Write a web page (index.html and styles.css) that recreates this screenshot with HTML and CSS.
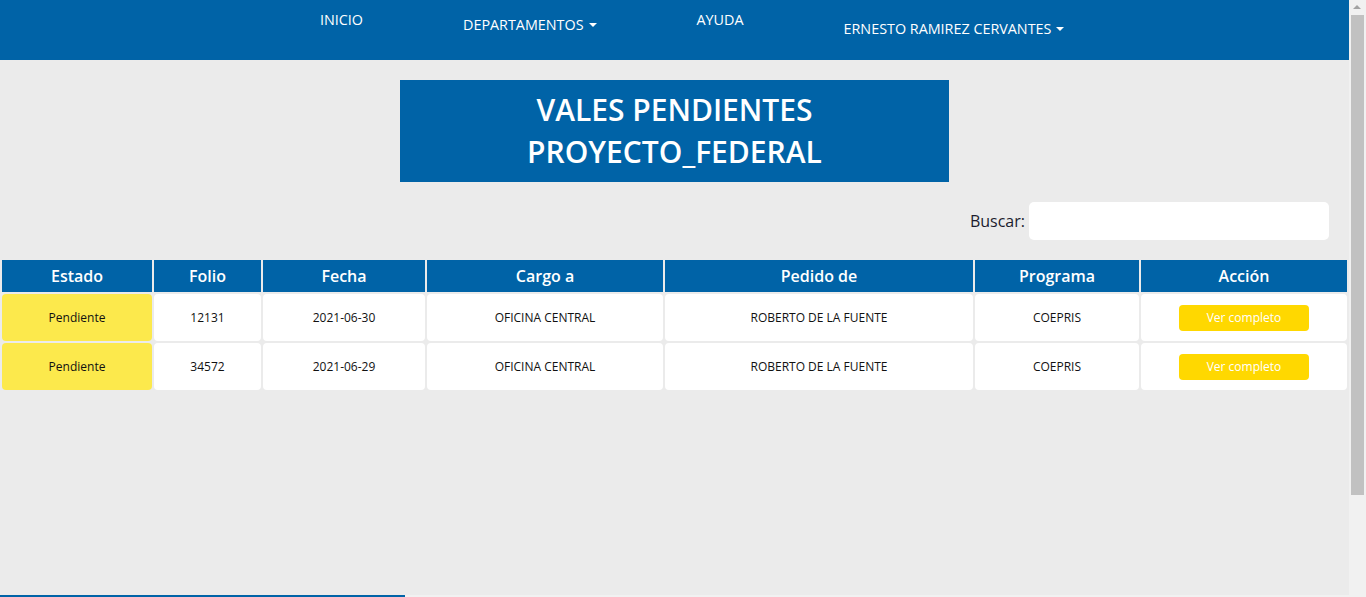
FILE: index.html
```html
<!DOCTYPE html>
<html lang="es">
<head>
<meta charset="utf-8">
<title>Vales pendientes</title>
<link rel="stylesheet" href="styles.css">
</head>
<body>
<nav class="navbar">
  <ul class="nav-list">
    <li class="nav-item nav-item--top"><a href="#">INICIO</a></li>
    <li class="nav-item nav-item--mid"><a href="#">DEPARTAMENTOS<span class="caret"></span></a></li>
    <li class="nav-item nav-item--top"><a href="#">AYUDA</a></li>
    <li class="nav-item nav-item--low"><a href="#">ERNESTO RAMIREZ CERVANTES<span class="caret"></span></a></li>
  </ul>
</nav>
<main class="main">
  <h2 class="page-title">VALES PENDIENTES<br>PROYECTO_FEDERAL</h2>
  <div class="search-row">
    <label class="search-label" for="buscar">Buscar:</label>
    <input class="search-input" id="buscar" type="search">
  </div>
  <table class="vales">
    <thead>
      <tr>
        <th class="col-estado">Estado</th>
        <th class="col-folio">Folio</th>
        <th class="col-fecha">Fecha</th>
        <th class="col-cargo">Cargo a</th>
        <th class="col-pedido">Pedido de</th>
        <th class="col-programa">Programa</th>
        <th class="col-accion">Acción</th>
      </tr>
    </thead>
    <tbody>
      <tr>
        <td class="estado">Pendiente</td>
        <td>12131</td>
        <td>2021-06-30</td>
        <td>OFICINA CENTRAL</td>
        <td>ROBERTO DE LA FUENTE</td>
        <td>COEPRIS</td>
        <td><button class="btn-ver">Ver completo</button></td>
      </tr>
      <tr>
        <td class="estado">Pendiente</td>
        <td>34572</td>
        <td>2021-06-29</td>
        <td>OFICINA CENTRAL</td>
        <td>ROBERTO DE LA FUENTE</td>
        <td>COEPRIS</td>
        <td><button class="btn-ver">Ver completo</button></td>
      </tr>
    </tbody>
  </table>
</main>
<footer class="footer">
  <div class="footer-bar"></div>
</footer>
<div class="fake-scrollbar" aria-hidden="true">
  <span class="scroll-arrow-up"></span>
  <span class="scroll-thumb"></span>
</div>
</body>
</html>
```
FILE: styles.css
```css
html {
  background: #ebebeb;
}

body {
  margin: 0;
  padding-right: 17px;
  font-family: "Open Sans", "Liberation Sans", sans-serif;
  color: #111;
  background: #ebebeb;
}

/* imitation of the window's vertical scrollbar */
.fake-scrollbar {
  position: fixed;
  top: 0;
  right: 0;
  width: 17px;
  height: 100vh;
  background: #f1f1f1;
}
.scroll-arrow-up {
  position: absolute;
  top: 5px;
  left: 4px;
  width: 0;
  height: 0;
  border-left: 4px solid transparent;
  border-right: 4px solid transparent;
  border-bottom: 4px solid #a3a3a3;
}
.scroll-thumb {
  position: absolute;
  top: 15px;
  left: 2px;
  width: 13px;
  height: 480px;
  background: #c1c1c1;
}

.navbar {
  height: 60px;
  background: #0063a7;
}
.nav-list {
  list-style: none;
  margin: 0;
  padding: 0 0 0 320px;
  display: flex;
  align-items: flex-start;
  gap: 100px;
}
.nav-item a {
  display: block;
  color: #fff;
  text-decoration: none;
  font-size: 14.35px;
  font-weight: 500;
  line-height: 20px;
  white-space: nowrap;
}
.nav-item--top a { padding-top: 10px; }
.nav-item--mid a { padding-top: 15px; }
.nav-item--low a { padding-top: 19px; }
.caret {
  display: inline-block;
  width: 0;
  height: 0;
  margin-left: 5px;
  vertical-align: 3px;
  border-left: 4px solid transparent;
  border-right: 4px solid transparent;
  border-top: 4px solid #fff;
}

.main {
  min-height: 535px;
  padding-top: 20px;
  box-sizing: border-box;
}
.page-title {
  width: 549px;
  margin: 0 auto;
  padding: 9px 0 9px;
  background: #0063a7;
  color: #fff;
  text-align: center;
  font-size: 30px;
  font-weight: 600;
  line-height: 42px;
}

.search-row {
  display: flex;
  justify-content: flex-end;
  align-items: center;
  gap: 4px;
  margin: 20px 20px 0 0;
}
.search-label {
  font-size: 16px;
  color: #1b1b2e;
}
.search-input {
  width: 300px;
  height: 38px;
  box-sizing: border-box;
  border: none;
  border-radius: 5px;
  background: #fff;
  outline: none;
}

.vales {
  width: 100%;
  margin-top: 18px;
  border-collapse: separate;
  border-spacing: 2px;
  table-layout: fixed;
}
.vales th {
  height: 32px;
  padding: 0;
  background: #0063a7;
  color: #fff;
  font-size: 16px;
  font-weight: 600;
  text-align: center;
}
.col-estado { width: 150px; }
.col-folio { width: 107px; }
.col-fecha { width: 162px; }
.col-cargo { width: 236px; }
.col-pedido { width: 308px; }
.col-programa { width: 164px; }
.col-accion { width: 206px; }

.vales td {
  height: 47px;
  padding: 0;
  background: #fff;
  border-radius: 4px;
  text-align: center;
  font-size: 12px;
  color: #111;
}
.vales td.estado {
  background: #fce94c;
}
.btn-ver {
  width: 130px;
  height: 26px;
  border: none;
  border-radius: 4px;
  background: #ffd800;
  color: #fff;
  font-family: "Open Sans", "Liberation Sans", sans-serif;
  font-size: 12px;
  cursor: pointer;
}

.footer {
  height: 105px;
  background: #f1f1f1;
}
.footer-bar {
  width: 405px;
  height: 3px;
  background: #0063a7;
}
```
